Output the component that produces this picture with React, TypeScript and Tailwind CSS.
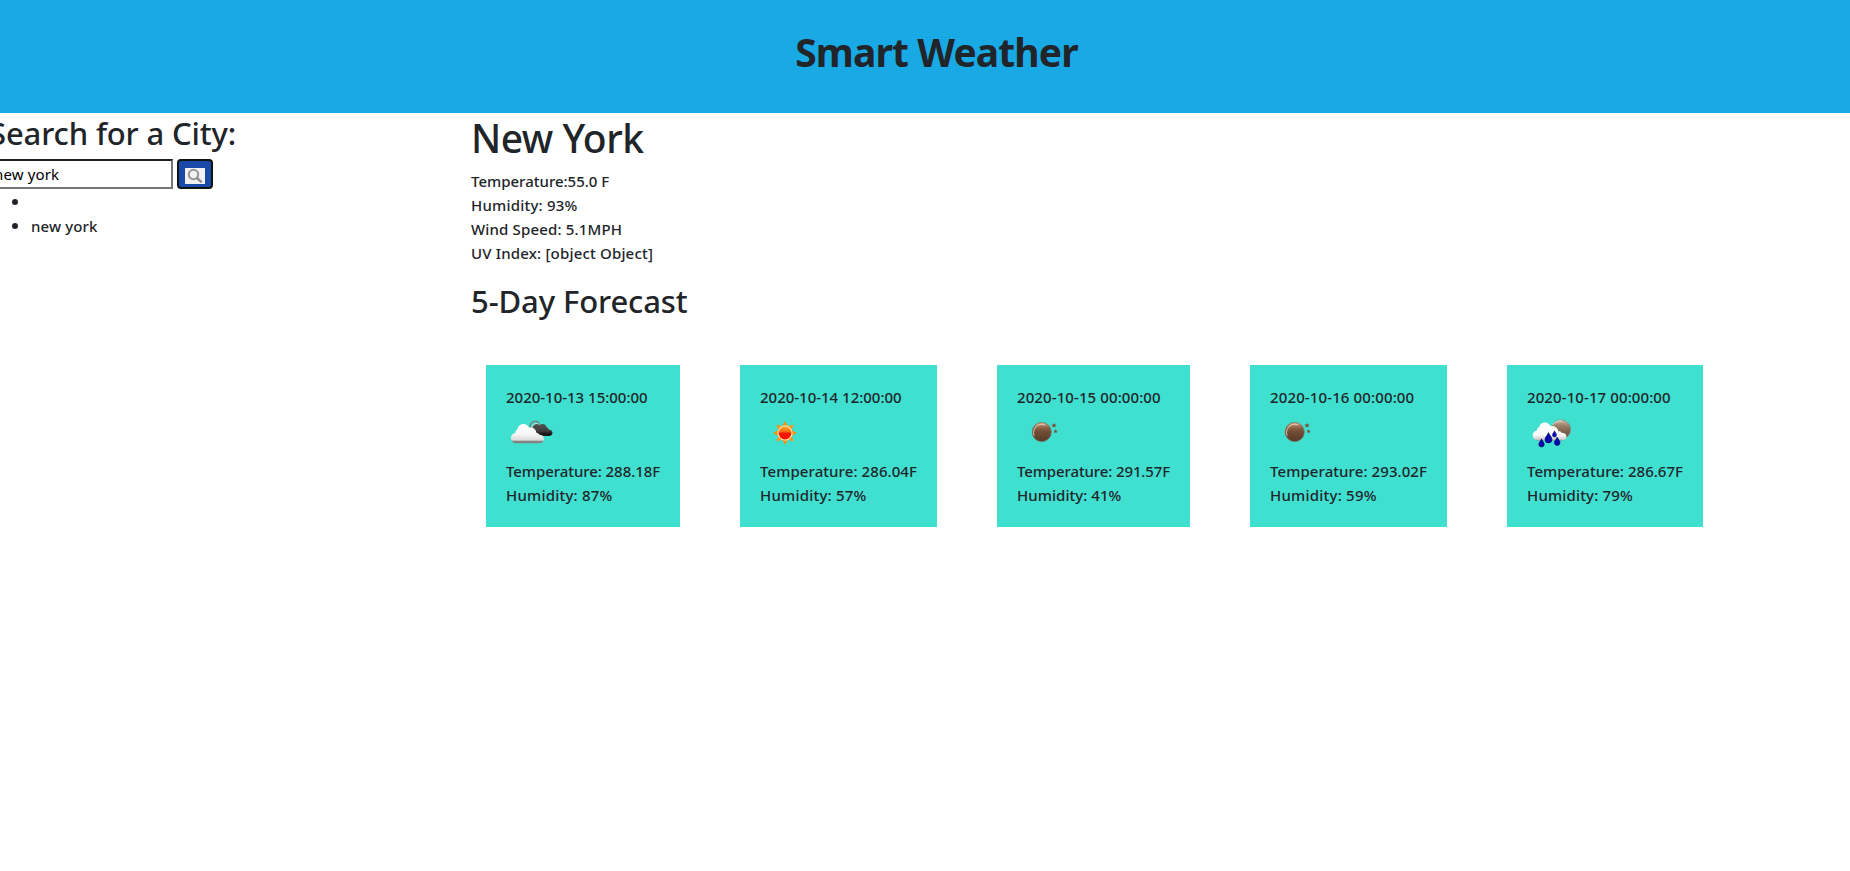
import type { ReactNode } from "react";

function CloudsIcon() {
  return (
    <svg viewBox="0 0 50 50" className="block h-[50px] w-[50px]">
      <defs>
        <linearGradient id="darkCloud" x1="0" y1="0" x2="0" y2="1">
          <stop offset="0" stopColor="#555" />
          <stop offset="0.6" stopColor="#3c3c3c" />
          <stop offset="0.85" stopColor="#111" />
          <stop offset="1" stopColor="#222" />
        </linearGradient>
        <linearGradient id="lightCloud" x1="0" y1="0" x2="0" y2="1">
          <stop offset="0" stopColor="#fff" />
          <stop offset="0.5" stopColor="#f8f8f8" />
          <stop offset="0.83" stopColor="#dcdcdc" />
          <stop offset="0.92" stopColor="#777" />
          <stop offset="1" stopColor="#8a8a8a" />
        </linearGradient>
      </defs>
      <path d="M25 20.500a5.2 5.2 0 0 1 8.500-6" fill="none" stroke="#777" strokeWidth="1.200" />
      <path d="M26.3 19.500a4.2 4.2 0 0 1 6-4.400" fill="none" stroke="#ddd" strokeWidth="1" />
      <path d="M26.5 19.500a4.3 4.3 0 0 1 7-3.600a4.4 4.4 0 0 1 7 2.200a3.2 3.2 0 0 1 2 2.500c2.3 0 4 1.300 4 3.200s-1.500 3.200-3.500 3.200H32z" fill="url(#darkCloud)" />
      <path d="M10 34.300c-3 0-5-2.500-5-5.200c0-2.900 1.900-4.800 4.400-5.300c-.2-1.500.7-3 2.100-3.500c.5-3.200 3-5.300 5.900-5.300c2.600 0 4.600 1.400 5.600 3.600c4-.8 7 1.500 7.300 5.100c1.300-.2 2.400.6 2.800 1.700c3 .1 4.900 2 4.900 4.500c0 2.400-1.800 4.400-4.400 4.400z" fill="url(#lightCloud)" />
    </svg>
  );
}

function SunIcon() {
  const rays = [0, 45, 90, 135, 180, 225, 270, 315];
  return (
    <svg viewBox="0 0 50 50" className="block h-[50px] w-[50px]">
      <defs>
        <linearGradient id="sunDisc" x1="0" y1="0" x2="0" y2="1">
          <stop offset="0" stopColor="#ffb02e" />
          <stop offset="0.4" stopColor="#ff6a10" />
          <stop offset="0.52" stopColor="#ff1800" />
          <stop offset="1" stopColor="#ff0500" />
        </linearGradient>
      </defs>
      {rays.map((a) => (
        <path key={a} d="M22.300 17L25 12L27.700 17z" fill="#ff9410" transform={`rotate(${a} 25 24)`} />
      ))}
      <circle cx="25" cy="24" r="7" fill="url(#sunDisc)" stroke="#ffe3b0" strokeWidth="1.200" />
    </svg>
  );
}

function MoonGradient({ id, light }: { id: string; light: string }) {
  return (
    <linearGradient id={id} x1="0" y1="0" x2="0" y2="1">
      <stop offset="0" stopColor={light} />
      <stop offset="0.28" stopColor="#8b6244" />
      <stop offset="0.5" stopColor="#704b33" />
      <stop offset="1" stopColor="#583b2a" />
    </linearGradient>
  );
}

function MoonIcon({ id }: { id: string }) {
  return (
    <svg viewBox="0 0 50 50" className="block h-[50px] w-[50px]">
      <defs>
        <MoonGradient id={id} light="#d9a98c" />
      </defs>
      <circle cx="24.700" cy="23" r="9.600" fill={`url(#${id})`} stroke="#7d6a58" strokeWidth="0.700" />
      <path d="M17 26.500a8.300 8.300 0 0 1 4.500-10.600a9 9 0 0 1 6-.3" fill="none" stroke="#f0d3c2" strokeWidth="1" strokeLinecap="round" opacity="0.850" />
      <path d="M37 14l.8 1.600 1.700.1-1.300 1.200.4 1.700-1.600-.9-1.600.9.4-1.700-1.300-1.200 1.700-.1z" fill="#7a5238" />
      <path d="M38.500 20.300l.6 1.300 1.400.1-1 1 .3 1.400-1.300-.7-1.300.7.3-1.400-1-1 1.400-.1z" fill="#7a5238" />
    </svg>
  );
}

function Drop({ x, y, s }: { x: number; y: number; s: number }) {
  return (
    <path
      d="M0-5C1-2 3.500-.5 3.500 2A3.500 3.500 0 0 1-3.500 2C-3.500-.5-1-2 0-5z"
      fill="#0606b4"
      stroke="#00005a"
      strokeWidth="0.700"
      transform={`translate(${x} ${y}) scale(${s})`}
    />
  );
}

function RainIcon() {
  return (
    <svg viewBox="0 0 50 50" className="block h-[50px] w-[50px]">
      <defs>
        <linearGradient id="rainMoon" x1="0" y1="0" x2="0" y2="1">
          <stop offset="0" stopColor="#d2c0b0" />
          <stop offset="0.3" stopColor="#9a7f6a" />
          <stop offset="0.6" stopColor="#7d6350" />
          <stop offset="1" stopColor="#6a5242" />
        </linearGradient>
        <linearGradient id="rainCloud" x1="0" y1="0" x2="0" y2="1">
          <stop offset="0" stopColor="#fff" />
          <stop offset="0.7" stopColor="#fafafa" />
          <stop offset="0.93" stopColor="#ccc" />
          <stop offset="1" stopColor="#8a8a8a" />
        </linearGradient>
      </defs>
      <circle cx="34" cy="20.500" r="9.600" fill="url(#rainMoon)" stroke="#8d7d6c" strokeWidth="0.600" />
      <path d="M26 15.500a9 9 0 0 1 8.500-3.500" fill="none" stroke="#eee4da" strokeWidth="0.900" strokeLinecap="round" />
      <path d="M11 31.500c-3 0-5.300-2-5.300-4.900c0-2.900 1.900-4.700 4.300-5c-.2-1.500.8-2.900 2.200-3.300c.5-2.900 2.800-4.700 5.500-4.700c2.600 0 4.600 1.300 5.600 3.500c4-.8 7.300 1.200 8.200 5.300c1.300-.2 2.400.3 2.900 1.400c3 .1 5.100 1.500 5.100 3.900c0 2.300-1.800 3.900-4.400 3.900z" fill="url(#rainCloud)" />
      <Drop x={14.500} y={33.700} s={0.780} />
      <Drop x={21.500} y={28.500} s={0.980} />
      <Drop x={27.500} y={24.700} s={0.600} />
      <Drop x={30.200} y={32} s={0.800} />
    </svg>
  );
}

type Day = {
  date: string;
  temperature: string;
  humidity: string;
  width: string;
  dateTracking: string;
  tempTracking: string;
  humidityTracking: string;
  icon: ReactNode;
};

const days: Day[] = [
  { date: "2020-10-13 15:00:00", temperature: "288.18F", humidity: "87%", width: "w-[194px]", dateTracking: "tracking-[-0.01px]", tempTracking: "tracking-[-0.07px]", humidityTracking: "tracking-[0.2px]", icon: <CloudsIcon /> },
  { date: "2020-10-14 12:00:00", temperature: "286.04F", humidity: "57%", width: "w-[197px]", dateTracking: "tracking-[-0.01px]", tempTracking: "tracking-[0.08px]", humidityTracking: "tracking-[0.2px]", icon: <SunIcon /> },
  { date: "2020-10-15 00:00:00", temperature: "291.57F", humidity: "41%", width: "w-[193px]", dateTracking: "tracking-[0.1px]", tempTracking: "tracking-[-0.12px]", humidityTracking: "tracking-[0.04px]", icon: <MoonIcon id="moonA" /> },
  { date: "2020-10-16 00:00:00", temperature: "293.02F", humidity: "59%", width: "w-[197px]", dateTracking: "tracking-[0.13px]", tempTracking: "tracking-[0.08px]", humidityTracking: "tracking-[0.22px]", icon: <MoonIcon id="moonB" /> },
  { date: "2020-10-17 00:00:00", temperature: "286.67F", humidity: "79%", width: "w-[196px]", dateTracking: "tracking-[0.1px]", tempTracking: "tracking-[0.03px]", humidityTracking: "tracking-[0.16px]", icon: <RainIcon /> },
];

function ForecastCard({ day }: { day: Day }) {
  return (
    <article className={`${day.width} h-[162px] shrink-0 whitespace-nowrap bg-[#40e0d0] p-5`}>
      <p className={day.dateTracking}>{day.date}</p>
      {day.icon}
      <p className={day.tempTracking}>Temperature: {day.temperature}</p>
      <p className={day.humidityTracking}>Humidity: {day.humidity}</p>
    </article>
  );
}

function SearchPanel() {
  return (
    <aside className="-ml-[11px] w-[482px] shrink-0">
      <h2 className="mb-[7px] pt-px text-[31px] leading-[38px] tracking-[-0.13px] whitespace-nowrap">Search for a City:</h2>
      <form className="flex gap-1" onSubmit={(e) => e.preventDefault()}>
        <input
          type="text"
          defaultValue="new york"
          className="h-[30px] w-[184px] border-2 border-t-[#212121] border-r-[#767676] border-b-[#767676] border-l-[#212121] bg-white px-[3px] font-normal tracking-[0.15px] text-black outline-none"
        />
        <button type="submit" aria-label="Search" className="flex h-[30px] w-9 items-center justify-center rounded-[4px] border-2 border-[#101114] bg-[#1a4aa8] pt-1">
          <svg viewBox="0 0 20 16" className="h-4 w-5 bg-[#f1f1f1]">
            <circle cx="8.500" cy="6.500" r="4.700" fill="none" stroke="#969696" strokeWidth="2" />
            <path d="M12.300 10.300L16 13.700" stroke="#8c8c8c" strokeWidth="2.400" strokeLinecap="round" />
          </svg>
        </button>
      </form>
      <ul className="list-disc pl-[42px] marker:text-[18px]">
        <li className="h-6" />
        <li className="h-6 tracking-[0.12px]">new york</li>
      </ul>
    </aside>
  );
}

export default function App() {
  return (
    <div className="min-h-screen overflow-hidden bg-white font-['Noto_Sans',sans-serif] text-[15px] leading-6 font-medium text-[#212529]">
      <header className="flex h-[113px] justify-center bg-[#19a9e5] pt-[28px] pl-[23px]">
        <h1 className="text-[39px] leading-[48px] font-bold tracking-[-0.87px]">Smart Weather</h1>
      </header>
      <main className="flex">
        <SearchPanel />
        <section className="shrink-0">
          <h1 className="mb-[7px] pt-px text-[39px] leading-[48px] tracking-[-0.5px]">New York</h1>
          <p>Temperature:55.0 F</p>
          <p className="tracking-[0.2px]">Humidity: 93%</p>
          <p className="tracking-[0.16px]">Wind Speed: 5.1MPH</p>
          <p className="tracking-[0.18px]">UV Index: [object Object]</p>
          <h2 className="mt-[17px] text-[31px] leading-[38px] tracking-[-0.1px]">5-Day Forecast</h2>
          <div className="mt-[45px] ml-[15px] flex gap-[60px]">
            {days.map((day) => (
              <ForecastCard key={day.date} day={day} />
            ))}
          </div>
        </section>
      </main>
    </div>
  );
}
